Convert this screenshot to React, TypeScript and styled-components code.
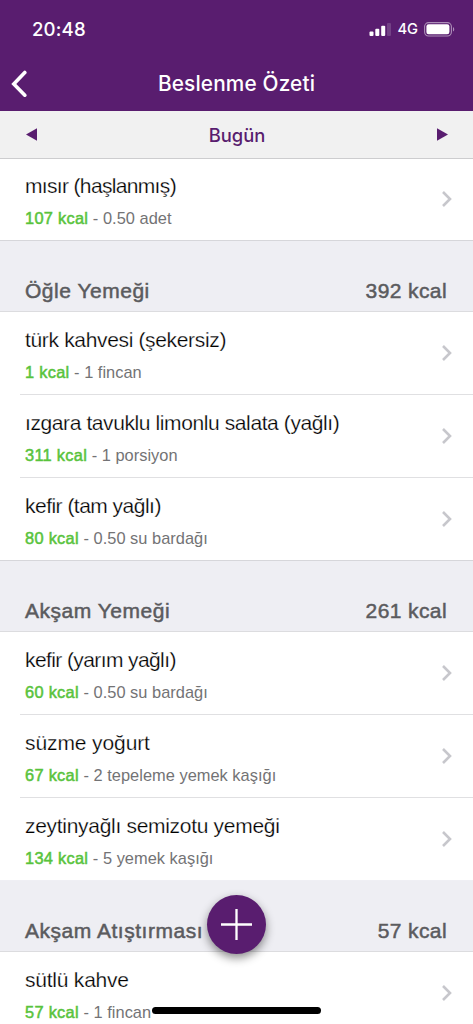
import React from 'react';
import styled, { createGlobalStyle } from 'styled-components';

const GlobalStyle = createGlobalStyle`
  *, *::before, *::after { box-sizing: border-box; }
  body { margin: 0; background: #fff; }
`;

const purple = '#591d6f';

const Screen = styled.main`
  position: relative;
  display: flex;
  flex-direction: column;
  width: 473px;
  height: 1024px;
  overflow: hidden;
  background: #fff;
  font-family: 'Liberation Sans', Arial, sans-serif;
  white-space: nowrap;
`;

const TopBar = styled.header`
  flex: none;
  height: 111px;
  background: ${purple};
  color: #fff;
  font-family: Inter, sans-serif;
`;

const StatusBar = styled.div`
  display: flex;
  align-items: center;
  justify-content: space-between;
  height: 56px;
  padding: 2px 18px 0 32px;
`;

const Clock = styled.span`
  font-size: 18.6px;
  font-weight: 550;
  letter-spacing: 0.15px;
`;

const StatusIcons = styled.div`
  display: flex;
  align-items: center;
  gap: 6px;
`;

const Network = styled.span`
  font-size: 14.7px;
  font-weight: 450;
  line-height: 18px;
`;

const NavBar = styled.nav`
  display: grid;
  grid-template-columns: 60px 1fr 60px;
  align-items: center;
  height: 55px;
`;

const BackButton = styled.button`
  display: flex;
  padding: 0 0 0 10px;
  border: 0;
  background: none;
`;

const ScreenTitle = styled.h1`
  margin: 0;
  font-size: 20.8px;
  font-weight: 550;
  letter-spacing: 0.15px;
  text-align: center;
`;

const DayBar = styled.div`
  position: relative;
  z-index: 1;
  flex: none;
  display: flex;
  align-items: center;
  justify-content: space-between;
  height: 48px;
  padding: 0 25px 0 26px;
  border-bottom: 1px solid #cdcdcf;
  background: #f1f1f1;
  color: ${purple};
`;

const DayLabel = styled.span`
  font-family: Inter, sans-serif;
  font-size: 18.4px;
  font-weight: 550;
  letter-spacing: 0;
`;

const List = styled.div`
  flex: none;
  margin-top: -1px;
`;

const SectionHeader = styled.div<{ $plainTop?: boolean }>`
  display: flex;
  justify-content: space-between;
  height: 72px;
  margin-top: -1px;
  padding: 37px 26px 0 25px;
  border-top: 1px solid ${(p) => (p.$plainTop ? '#efeff4' : '#d6d6da')};
  border-bottom: 1px solid #dcdcdf;
  background: #eeeef3;
  color: #5b5b5e;
  font-size: 21px;
  line-height: 26px;
  -webkit-text-stroke: 0.5px currentColor;
`;

const MealTitle = styled.span`
  letter-spacing: 0.52px;
`;

const MealTotal = styled.span`
  letter-spacing: 0.4px;
`;

const Row = styled.div`
  display: flex;
  align-items: center;
  justify-content: space-between;
  height: 83px;
  padding-right: 20px;
  padding-left: 25px;
`;

const RowDivider = styled.div`
  height: 1px;
  margin: -1px 0 0 20px;
  background: #e0e0e2;
`;

const FoodText = styled.div`
  align-self: flex-start;
  padding-top: 15px;
`;

const FoodName = styled.div<{ $tracking: number }>`
  color: #000;
  font-size: 21px;
  line-height: 26px;
  letter-spacing: ${(p) => p.$tracking}px;
  -webkit-text-stroke: 0.25px #fff;
`;

const FoodDetail = styled.div`
  margin-top: 7px;
  color: #737375;
  font-size: 16.4px;
  line-height: 24px;
  letter-spacing: 0.02px;
`;

const Calories = styled.span`
  color: #58c33c;
  letter-spacing: 0.28px;
  -webkit-text-stroke: 0.5px currentColor;
`;

const AddButton = styled.button`
  position: absolute;
  top: 895px;
  left: 207px;
  display: flex;
  align-items: center;
  justify-content: center;
  width: 59px;
  height: 59px;
  padding: 0;
  border: 0;
  border-radius: 50%;
  background: ${purple};
  box-shadow: 0 4px 10px rgba(0, 0, 0, 0.45);
`;

const HomeIndicator = styled.div`
  position: absolute;
  top: 1007px;
  left: 152px;
  width: 169px;
  height: 7px;
  border-radius: 4px;
  background: #000;
`;

const ChevronIcon = styled.svg`
  margin-bottom: 2px;
`;

const Chevron = () => (
  <ChevronIcon width="12" height="18" viewBox="0 0 12 18" fill="none" stroke="#c7c7cc" strokeWidth="2.6">
    <path d="M2 2 9 9 2 16" />
  </ChevronIcon>
);

interface Food {
  name: string;
  kcal: string;
  amount: string;
  tracking: number;
}

interface Meal {
  title?: string;
  total?: string;
  foods: Food[];
}

const meals: Meal[] = [
  { foods: [{ name: 'mısır (haşlanmış)', kcal: '107 kcal', amount: '0.50 adet', tracking: -0.66 }] },
  {
    title: 'Öğle Yemeği',
    total: '392 kcal',
    foods: [
      { name: 'türk kahvesi (şekersiz)', kcal: '1 kcal', amount: '1 fincan', tracking: -0.34 },
      { name: 'ızgara tavuklu limonlu salata (yağlı)', kcal: '311 kcal', amount: '1 porsiyon', tracking: -0.4 },
      { name: 'kefir (tam yağlı)', kcal: '80 kcal', amount: '0.50 su bardağı', tracking: -0.52 },
    ],
  },
  {
    title: 'Akşam Yemeği',
    total: '261 kcal',
    foods: [
      { name: 'kefir (yarım yağlı)', kcal: '60 kcal', amount: '0.50 su bardağı', tracking: -0.6 },
      { name: 'süzme yoğurt', kcal: '67 kcal', amount: '2 tepeleme yemek kaşığı', tracking: -0.1 },
      { name: 'zeytinyağlı semizotu yemeği', kcal: '134 kcal', amount: '5 yemek kaşığı', tracking: -0.3 },
    ],
  },
  {
    title: 'Akşam Atıştırması',
    total: '57 kcal',
    foods: [{ name: 'sütlü kahve', kcal: '57 kcal', amount: '1 fincan', tracking: -0.22 }],
  },
];

export default function App() {
  return (
    <Screen>
      <GlobalStyle />
      <TopBar>
        <StatusBar>
          <Clock>20:48</Clock>
          <StatusIcons>
            <svg width="22" height="13" viewBox="0 0 22 13" fill="#fff">
              <rect x="0.5" y="8.5" width="4" height="4.5" rx="1" />
              <rect x="6.3" y="5.7" width="4" height="7.3" rx="1" />
              <rect x="12.2" y="2.7" width="4" height="10.3" rx="1" />
              <rect x="18" y="0" width="4" height="13" rx="1" opacity="0.16" />
            </svg>
            <Network>4G</Network>
            <svg width="31" height="15" viewBox="0 0 31 15">
              <rect x="0.6" y="0.6" width="26.8" height="13.4" rx="4" fill="none" stroke="#fff" strokeOpacity="0.5" strokeWidth="1.1" />
              <rect x="2.4" y="2.3" width="23" height="10" rx="2.2" fill="#fff" />
              <path d="M29 5v4.6c1.7-.8 1.7-3.8 0-4.6Z" fill="#fff" opacity="0.5" />
            </svg>
          </StatusIcons>
        </StatusBar>
        <NavBar>
          <BackButton aria-label="Geri">
            <svg width="18" height="28" viewBox="0 0 18 28" fill="none" stroke="#fff" strokeWidth="3.6" strokeLinecap="round" strokeLinejoin="miter">
              <path d="M14.8 2.5 3.8 14 14.8 25.2" />
            </svg>
          </BackButton>
          <ScreenTitle>Beslenme Özeti</ScreenTitle>
        </NavBar>
      </TopBar>
      <DayBar>
        <svg width="11" height="13" viewBox="0 0 11 13" fill={purple}>
          <path d="M11 .3v12.4L0 6.5Z" />
        </svg>
        <DayLabel>Bugün</DayLabel>
        <svg width="11" height="13" viewBox="0 0 11 13" fill={purple}>
          <path d="M0 .3v12.4L11 6.5Z" />
        </svg>
      </DayBar>
      <List>
        {meals.map((meal, m) => (
          <React.Fragment key={m}>
            {meal.title && (
              <SectionHeader $plainTop={m === 3}>
                <MealTitle>{meal.title}</MealTitle>
                <MealTotal>{meal.total}</MealTotal>
              </SectionHeader>
            )}
            {meal.foods.map((food, f) => (
              <React.Fragment key={food.name}>
                {f > 0 && <RowDivider />}
                <Row>
                  <FoodText>
                    <FoodName $tracking={food.tracking}>{food.name}</FoodName>
                    <FoodDetail>
                      <Calories>{food.kcal}</Calories> - {food.amount}
                    </FoodDetail>
                  </FoodText>
                  <Chevron />
                </Row>
              </React.Fragment>
            ))}
          </React.Fragment>
        ))}
      </List>
      <AddButton aria-label="Ekle">
        <svg width="31" height="31" viewBox="0 0 31 31" stroke="#fff" strokeWidth="2.3">
          <path d="M15.5 0v31M0 15.5h31" />
        </svg>
      </AddButton>
      <HomeIndicator />
    </Screen>
  );
}
